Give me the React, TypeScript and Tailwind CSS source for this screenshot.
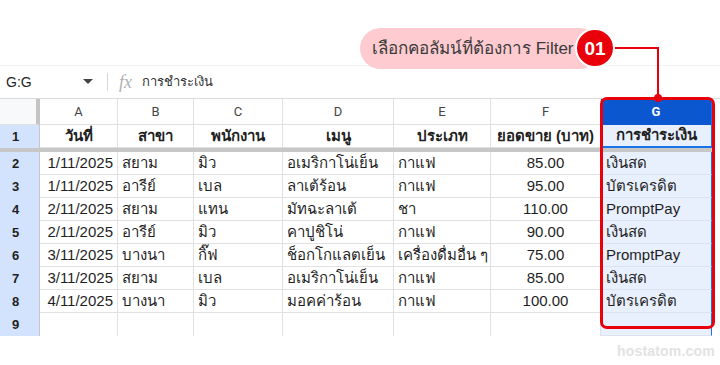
import React from "react";

const widths = [78, 76, 89, 111, 97, 110, 111];
const letters = ["A", "B", "C", "D", "E", "F", "G"];
const heads = ["วันที่", "สาขา", "พนักงาน", "เมนู", "ประเภท", "ยอดขาย (บาท)", "การชำระเงิน"];
const rows: string[][] = [
  ["1/11/2025", "สยาม", "มิว", "อเมริกาโน่เย็น", "กาแฟ", "85.00", "เงินสด"],
  ["1/11/2025", "อารีย์", "เบล", "ลาเต้ร้อน", "กาแฟ", "95.00", "บัตรเครดิต"],
  ["2/11/2025", "สยาม", "แทน", "มัทฉะลาเต้", "ชา", "110.00", "PromptPay"],
  ["2/11/2025", "อารีย์", "มิว", "คาปูชิโน่", "กาแฟ", "90.00", "เงินสด"],
  ["3/11/2025", "บางนา", "กิ๊ฟ", "ช็อกโกแลตเย็น", "เครื่องดื่มอื่น ๆ", "75.00", "PromptPay"],
  ["3/11/2025", "สยาม", "เบล", "อเมริกาโน่เย็น", "กาแฟ", "85.00", "เงินสด"],
  ["4/11/2025", "บางนา", "มิว", "มอคค่าร้อน", "กาแฟ", "100.00", "บัตรเครดิต"],
  ["", "", "", "", "", "", ""],
];

function align(i: number) {
  if (i === 0) return "justify-end pr-1";
  if (i === 5) return "justify-center";
  return "justify-start pl-1";
}

export default function App() {
  return (
    <div
      className="relative w-[720px] h-[365px] overflow-hidden bg-white text-[#1f1f1f]"
      style={{ fontFamily: '"Liberation Sans", Tahoma, sans-serif' }}
    >
      {/* top blank area */}
      <div className="h-[66px] border-b border-[#f3f3f3]" />

      {/* formula bar */}
      <div className="h-[32px] flex items-center">
        <div className="w-[80px] pl-[6px] text-[14px] text-[#1f1f1f]">G:G</div>
        <svg width="10" height="6" viewBox="0 0 10 6" className="ml-[3px]">
          <path d="M0 0 L10 0 L5 5 Z" fill="#444" />
        </svg>
        <div className="ml-[14px] w-px h-[18px] bg-[#d6d6d6]" />
        <div
          className="ml-[11px] text-[18px] italic text-[#b0b0b0] leading-none"
          style={{ fontFamily: '"Liberation Serif", serif' }}
        >
          fx
        </div>
        <div className="ml-[10px] text-[13px] text-[#333]">การชำระเงิน</div>
      </div>

      {/* grid */}
      <div className="border-t border-[#d9d9d9]">
        {/* column header row */}
        <div className="flex h-[26px]">
          <div className="w-[40px] h-full bg-[#f8f9fa] border-r-4 border-[#c4c4c4] border-b border-b-[#e1e1e1]" />
          {letters.map((l, i) => (
            <div
              key={l}
              style={{ width: widths[i] }}
              className={
                i === 6
                  ? "h-full flex items-center justify-center bg-[#0b57d0] text-white font-bold text-[13px] border-r border-[#1a73e8]"
                  : "h-full flex items-center justify-center text-[13px] text-[#444] border-r border-b border-[#e1e1e1]"
              }
            >
              <span style={{ fontFamily: 'Roboto, "Liberation Sans", sans-serif' }}>{l}</span>
            </div>
          ))}
        </div>

        {/* row 1 */}
        <div className="flex h-[23px]">
          <div className="w-[40px] h-full bg-[#d3e3fd] border-r border-[#c7c7c7] pl-3 flex items-center text-[13px] font-bold">
            1
          </div>
          {heads.map((h, i) => (
            <div
              key={h}
              style={{ width: widths[i] }}
              className={
                i === 6
                  ? "h-full flex items-center justify-center bg-[#e8f0fe] border-b-2 border-b-[#1a73e8] border-r border-r-[#1a73e8] text-[15px] font-bold whitespace-nowrap overflow-hidden"
                  : "h-full flex items-center justify-center border-r border-b border-[#e1e1e1] text-[15px] font-bold whitespace-nowrap overflow-hidden"
              }
            >
              {h}
            </div>
          ))}
        </div>

        {/* freeze bar */}
        <div className="h-[4px] w-[712px] bg-[#c7c7c7]" />

        {/* data rows */}
        {rows.map((r, ri) => (
          <div key={ri} className="flex h-[23px]">
            <div className="w-[40px] h-full bg-[#d3e3fd] border-r border-[#c7c7c7] pl-3 flex items-center text-[13px] font-bold">
              {ri + 2}
            </div>
            {r.map((c, i) => (
              <div
                key={i}
                style={{ width: widths[i] }}
                className={
                  (i === 6
                    ? "bg-[#e8f0fe] border-r border-r-[#1a73e8] border-b border-b-[#dde3ee] "
                    : "border-r border-[#e1e1e1] " + (ri < 7 ? "border-b " : "")) +
                  "h-full flex items-center text-[15px] whitespace-nowrap overflow-hidden " +
                  (i === 6 ? "justify-start pl-[5px]" : align(i))
                }
              >
                {c}
              </div>
            ))}
          </div>
        ))}
      </div>

      {/* annotation: red box around column G */}
      <div className="absolute left-[600px] top-[97px] w-[115px] h-[232px] border-[3px] border-[#e8000b] rounded-[7px]" />

      {/* connector line */}
      <div className="absolute left-[612px] top-[47px] w-[47px] h-[2px] bg-[#e8000b]" />
      <div className="absolute left-[657px] top-[47px] w-[2px] h-[51px] bg-[#e8000b]" />
      <div className="absolute left-[654px] top-[94px] w-[8px] h-[8px] rounded-full bg-[#e8000b]" />

      {/* callout pill */}
      <div className="absolute left-[360px] top-[28px] w-[240px] h-[41px] rounded-full bg-[#fdcbd0] flex items-center pl-[12px]">
        <span className="text-[17px] text-[#3a3a3a] whitespace-nowrap">เลือกคอลัมน์ที่ต้องการ Filter</span>
      </div>
      <div className="absolute left-[575px] top-[28px] w-[40px] h-[40px] rounded-full bg-[#e8000b] border-2 border-white flex items-center justify-center">
        <span className="text-[19px] font-bold text-white leading-none">01</span>
      </div>

      {/* watermark */}
      <div className="absolute right-[5px] bottom-[3px] text-[14px] font-bold text-[#e2e2e2] tracking-[0.2px]">
        hostatom.com
      </div>
    </div>
  );
}
